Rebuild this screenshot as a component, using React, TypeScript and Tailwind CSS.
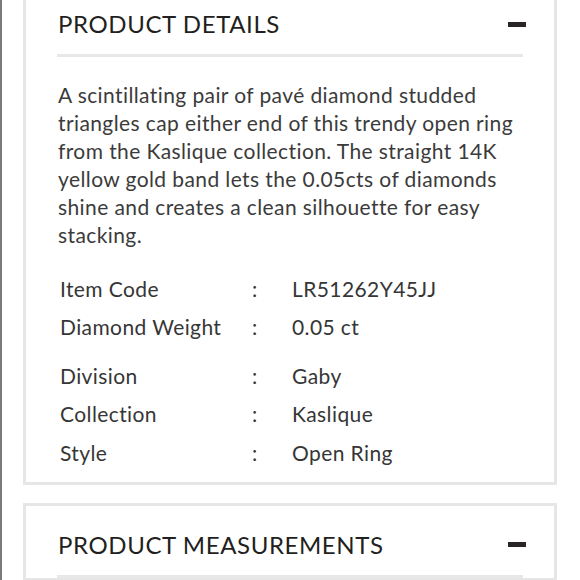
import React from "react";

const specsA = [
  { label: "Item Code", value: "LR51262Y45JJ" },
  { label: "Diamond Weight", value: "0.05 ct" },
];

const specsB = [
  { label: "Division", value: "Gaby" },
  { label: "Collection", value: "Kaslique" },
  { label: "Style", value: "Open Ring" },
];

function Minus() {
  return <span className="-mr-[3px] block h-[5px] w-[18px] bg-[#2b2424]" />;
}

function SectionHeader({ title }: { title: string }) {
  return (
    <div className="flex items-center justify-between">
      <h2 className="pl-[1px] font-['Lato',sans-serif] text-[24px] leading-[30px] tracking-[0.6px] text-[#231f20]">
        {title}
      </h2>
      <Minus />
    </div>
  );
}

function SpecRows({ rows }: { rows: { label: string; value: string }[] }) {
  return (
    <div className="flex flex-col">
      {rows.map((r) => (
        <div
          key={r.label}
          className="flex h-[38.5px] items-center text-[21px] tracking-[0.4px] text-[#363636]"
        >
          <span className="w-[195px] pl-[3px]">{r.label}</span>
          <span className="w-[40px]">:</span>
          <span>{r.value}</span>
        </div>
      ))}
    </div>
  );
}

export default function App() {
  return (
    <div className="h-[580px] w-[580px] overflow-hidden border-l-2 border-[#7b7b7b] bg-white font-['Lato',sans-serif]">
      <div className="ml-[21px] w-[534px]">
        {/* Product details card */}
        <section className="-mt-[10px] border-[3px] border-[#e6e6e6] px-[31px] pb-[10px] pt-[16px]">
          <SectionHeader title="PRODUCT DETAILS" />
          <div className="mt-[15px] h-[3px] bg-[#e8e8e8]" />
          <p className="mt-[24px] pl-[1px] text-[21px] leading-[28px] tracking-[0.4px] text-[#3b3b3b]">
            A scintillating pair of pavé diamond studded
            <br />
            triangles cap either end of this trendy open ring
            <br />
            from the Kaslique collection. The straight 14K
            <br />
            yellow gold band lets the 0.05cts of diamonds
            <br />
            shine and creates a clean silhouette for easy
            <br />
            stacking.
          </p>
          <div className="mt-[20px]">
            <SpecRows rows={specsA} />
          </div>
          <div className="mt-[10px]">
            <SpecRows rows={specsB} />
          </div>
        </section>

        {/* Product measurements card */}
        <section className="mt-[18px] border-[3px] border-[#e6e6e6] px-[31px] pt-[24px]">
          <SectionHeader title="PRODUCT MEASUREMENTS" />
          <div className="mt-[15px] h-[3px] bg-[#e8e8e8]" />
        </section>
      </div>
    </div>
  );
}
